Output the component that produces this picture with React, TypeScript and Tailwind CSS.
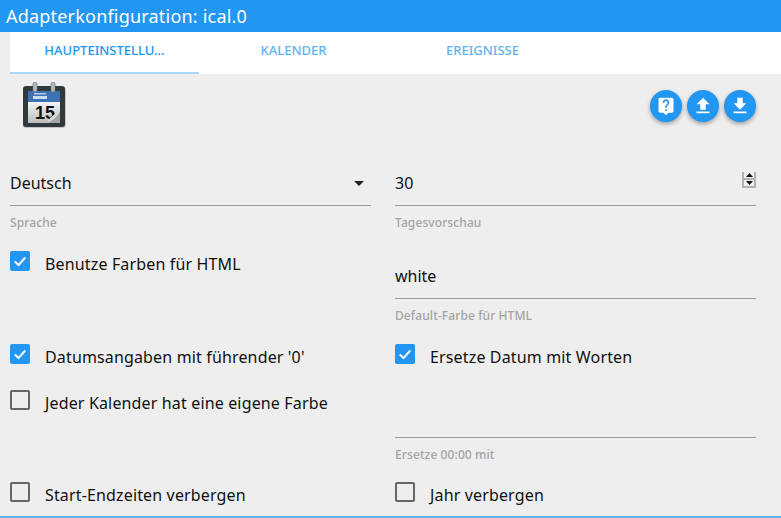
import { MdLiveHelp, MdFileUpload, MdFileDownload } from "react-icons/md";

function CalendarIcon() {
  return (
    <svg width="48" height="48" viewBox="0 0 48 48" className="block">
      <defs>
        <linearGradient id="pg" x1="0" y1="0" x2="0" y2="1">
          <stop offset="0" stopColor="#f4f4f4" />
          <stop offset="1" stopColor="#bdbdbd" />
        </linearGradient>
      </defs>
      <rect x="4" y="5" width="43" height="41" rx="3" fill="#9a9a9a" opacity="0.5" />
      <rect x="4" y="4" width="42" height="41" rx="3" fill="#32393c" />
      <rect x="9" y="9" width="32" height="11" fill="#3f72b3" />
      <rect x="9" y="20" width="32" height="21" fill="url(#pg)" />
      <rect x="15" y="11" width="12" height="1.5" fill="#cfe0f2" opacity="0.8" />
      <rect x="14" y="14" width="14" height="3" fill="#e6eef7" opacity="0.85" />
      <rect x="14" y="0" width="4" height="10" rx="2" fill="#b9bdbd" stroke="#6d7173" strokeWidth="0.7" />
      <rect x="32" y="0" width="4" height="10" rx="2" fill="#b9bdbd" stroke="#6d7173" strokeWidth="0.7" />
      <text x="26" y="37" textAnchor="middle" fontFamily="'Liberation Sans', sans-serif" fontWeight="700" fontSize="18" fill="#111">15</text>
      <path d="M28 41 L41 29 L41 41 Z" fill="#a5a5a5" />
      <path d="M28 41 C31 35 34 33 41 29 C37 36 34 38 28 41 Z" fill="#dcdcdc" />
    </svg>
  );
}

function Check({ checked }: { checked?: boolean }) {
  return checked ? (
    <span className="flex h-5 w-5 shrink-0 items-center justify-center rounded-[2px] bg-[#2196f3]">
      <svg width="14" height="14" viewBox="0 0 24 24" fill="none" stroke="#fff" strokeWidth="3.4">
        <path d="M3 13 L9.5 19 L21 6" />
      </svg>
    </span>
  ) : (
    <span className="block h-5 w-5 shrink-0 rounded-[2px] border-2 border-[#666]" />
  );
}

function CheckRow({ label, checked }: { label: string; checked?: boolean }) {
  return (
    <div className="flex items-start gap-[15px]">
      <Check checked={checked} />
      <span className="mt-[3px] text-[16px] leading-5 tracking-[0.15px] text-[#111]">{label}</span>
    </div>
  );
}

function Field({ value, label, children }: { value?: string; label: string; children?: React.ReactNode }) {
  return (
    <div className="pt-[15px]">
      <div className="flex h-[33px] items-start justify-between border-b border-[#9a9a9a] pt-0 text-[16px] leading-5 text-[#111]">
        <span>{value}</span>
        {children}
      </div>
      <div className="mt-[9px] text-[12px] font-medium leading-[15px] tracking-[0.1px] text-[#a3a3a3]">{label}</div>
    </div>
  );
}

function RoundButton({ children }: { children: React.ReactNode }) {
  return (
    <span className="flex h-8 w-8 items-center justify-center rounded-full bg-[#2196f3] text-white shadow-[0_2px_4px_rgba(0,0,0,0.35)]">
      {children}
    </span>
  );
}

export default function App() {
  return (
    <div className="flex h-[518px] w-[781px] flex-col overflow-hidden bg-[#eeeeee] font-['Noto_Sans','Open_Sans',sans-serif]">
      <header className="h-8 bg-[#2196f3] pl-[6px] text-[18px] leading-8 tracking-[0.2px] text-white">
        Adapterkonfiguration: ical.0
      </header>
      <nav className="ml-[10px] flex h-[42px] bg-white text-[13px] font-medium leading-[36px]">
        <div className="h-[42px] w-[189px] border-b-2 border-[#a9d6f8] text-center text-[#2196f3]">HAUPTEINSTELLU…</div>
        <div className="w-[189px] text-center text-[#62b3f5]">KALENDER</div>
        <div className="w-[189px] text-center text-[#62b3f5]">EREIGNISSE</div>
      </nav>
      <div className="flex h-[84px] items-start justify-between pl-[19px] pr-[25px] pt-[8px]">
        <CalendarIcon />
        <div className="mt-[8px] flex gap-[5px]">
          <RoundButton><MdLiveHelp size={20} /></RoundButton>
          <RoundButton><MdFileUpload size={22} /></RoundButton>
          <RoundButton><MdFileDownload size={22} /></RoundButton>
        </div>
      </div>
      <div className="grid flex-1 grid-cols-[361px_361px] grid-rows-[93px_93px_46px_92px_34px] gap-x-6 pl-[10px]">
        <Field value="Deutsch" label="Sprache">
          <svg width="10" height="5" viewBox="0 0 10 5" className="mr-[7px] mt-2"><path d="M0 0 H10 L5 5 Z" fill="#222" /></svg>
        </Field>
        <Field value="30" label="Tagesvorschau">
          <span className="mt-[-1px] flex h-4 w-[14px] flex-col items-center border-2 border-t-0 border-[#b0b0b0] bg-[#f0f0f0]">
            <svg width="7" height="6" viewBox="0 0 7 6"><path d="M0 5 L3.5 1 L7 5 Z" fill="#111" /></svg>
            <span className="h-[2px] w-full bg-[#b0b0b0]" />
            <svg width="7" height="6" viewBox="0 0 7 6"><path d="M0 1 L7 1 L3.5 5 Z" fill="#111" /></svg>
          </span>
        </Field>
        <CheckRow label="Benutze Farben für HTML" checked />
        <Field value="white" label="Default-Farbe für HTML" />
        <CheckRow label="Datumsangaben mit führender '0'" checked />
        <CheckRow label="Ersetze Datum mit Worten" checked />
        <CheckRow label="Jeder Kalender hat eine eigene Farbe" />
        <Field label="Ersetze 00:00 mit" />
        <CheckRow label="Start-Endzeiten verbergen" />
        <CheckRow label="Jahr verbergen" />
      </div>
      <div className="h-[2px] shrink-0 bg-[#64b5f6]" />
    </div>
  );
}
